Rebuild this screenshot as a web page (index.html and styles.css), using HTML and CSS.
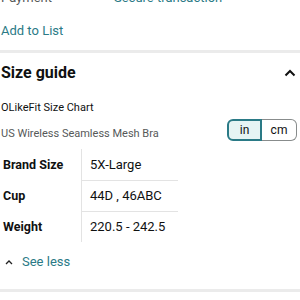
FILE: index.html
```html
<!DOCTYPE html>
<html lang="en">
<head>
  <meta charset="UTF-8" />
  <meta name="viewport" content="width=device-width, initial-scale=1.0" />
  <title>Size guide</title>
  <link rel="stylesheet" href="styles.css">
</head>
<body>
  <div class="page">
    <div class="info-row">
      <span class="info-label">Payment</span>
      <span class="info-value">Secure transaction</span>
    </div>
    <a class="link add-list" href="#">Add to List</a>
  </div>

  <div class="divider"></div>

  <section class="guide">
    <div class="guide-head">
      <h2>Size guide</h2>
      <svg class="chevron" width="12" height="8" viewBox="0 0 12 8">
        <path d="M1.5 6.5 L6 2 L10.5 6.5" fill="none" stroke="#111" stroke-width="2"/>
      </svg>
    </div>

    <div class="chart-name">OLikeFit Size Chart</div>
    <div class="chart-sub">
      <span>US Wireless Seamless Mesh Bra</span>
      <div class="units">
        <button class="unit active">in</button>
        <button class="unit">cm</button>
      </div>
    </div>

    <table class="sizes">
      <tr>
        <th>Brand Size</th>
        <td>5X-Large</td>
      </tr>
      <tr>
        <th>Cup</th>
        <td>44D , 46ABC</td>
      </tr>
      <tr>
        <th>Weight</th>
        <td>220.5 - 242.5</td>
      </tr>
    </table>

    <a class="link see-less" href="#">
      <svg width="8" height="6" viewBox="0 0 8 6">
        <path d="M1 5 L4 2 L7 5" fill="none" stroke="#222" stroke-width="1.3"/>
      </svg>
      See less
    </a>
  </section>

  <div class="divider bottom"></div>
</body>
</html>
```

FILE: styles.css
```css
body {
  margin: 0;
  font-family: Roboto, "Noto Sans", Arial, sans-serif;
  color: #0f1111;
  background: #fff;
  overflow: hidden;
}
.page {
  margin-top: -10px;
  padding: 0 1px;
}
.info-row {
  display: flex;
  font-size: 13px;
  height: 18px;
  color: #565959;
}
.info-label {
  width: 113px;
}
.info-value {
  color: #2a7a86;
}
.link {
  color: #2a7a86;
  text-decoration: none;
  font-size: 13px;
}
.add-list {
  display: block;
  margin-top: 14px;
  line-height: 18px;
}
.divider {
  height: 3px;
  background: #ebebeb;
  margin-top: 10px;
}
.guide {
  padding: 0 1px;
}
.guide-head {
  display: flex;
  justify-content: space-between;
  align-items: center;
  margin-top: 9px;
}
.guide-head h2 {
  margin: 0;
  font-size: 16px;
  font-weight: 700;
  line-height: 22px;
}
.chevron {
  margin-right: 3px;
}
.chart-name {
  font-size: 11px;
  margin-top: 16px;
  line-height: 15px;
}
.chart-sub {
  display: flex;
  justify-content: space-between;
  align-items: center;
  font-size: 11px;
  color: #565959;
  margin-top: 4px;
}
.chart-sub span {
  padding-top: 6px;
}
.units {
  display: flex;
  margin-right: 2px;
}
.unit {
  font-family: inherit;
  font-size: 12px;
  color: #0f1111;
  width: 35px;
  height: 22px;
  padding: 0;
  background: #fff;
  border: 1px solid #888c8c;
  border-left: none;
  border-radius: 0 6px 6px 0;
}
.unit.active {
  background: #e6f4f4;
  border: 2px solid #2a7a86;
  border-radius: 6px 0 0 6px;
}
.sizes {
  border-collapse: collapse;
  margin-top: 8px;
  font-size: 13px;
}
.sizes th {
  text-align: left;
  font-weight: 700;
  font-size: 12.5px;
  width: 78px;
  padding: 0 0 0 2px;
  border-right: 1px solid #e3e3e3;
  height: 31px;
}
.sizes td {
  width: 88px;
  padding: 0 0 0 8px;
  border-bottom: 1px solid #e3e3e3;
}
.sizes tr:last-child td {
  border-bottom: none;
}
.see-less {
  display: flex;
  align-items: center;
  gap: 9px;
  margin: 11px 0 0 4px;
  line-height: 18px;
}
.divider.bottom {
  margin-top: 18px;
}
```
